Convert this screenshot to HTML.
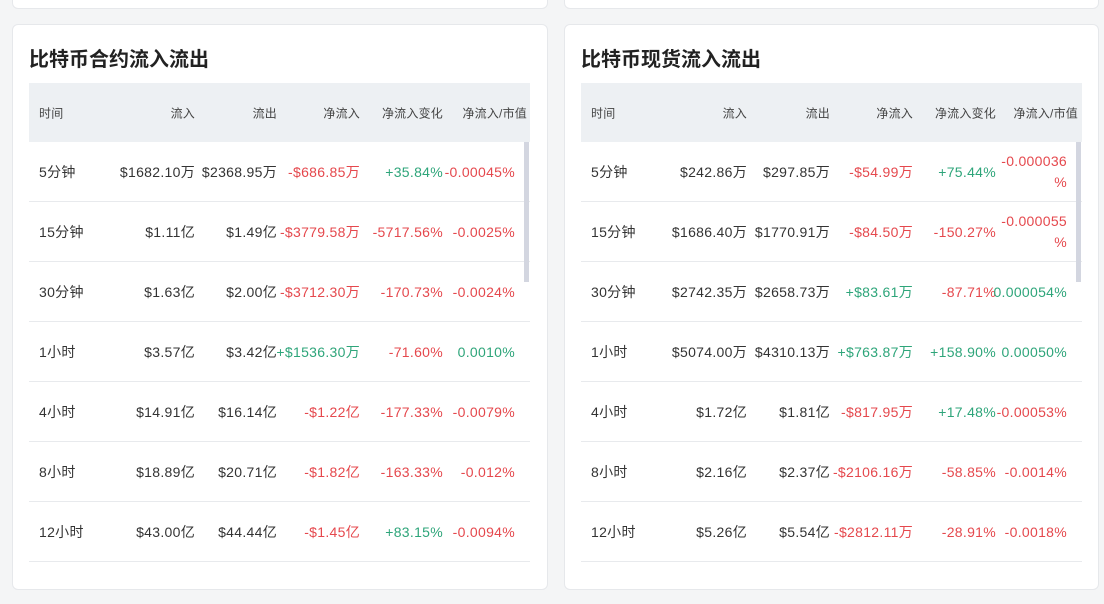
<!DOCTYPE html><html><head><meta charset="utf-8"><style>
body{margin:0;width:1104px;height:604px;background:#f4f5f6;font-family:"Liberation Sans","Noto Sans CJK SC",sans-serif;position:relative;overflow:hidden;color:#333}
.card{position:absolute;background:#fff;border:1px solid #e6e8eb;border-radius:6px}
h2{position:absolute;margin:0;font-size:20px;font-weight:bold;color:#222;top:18px;left:16px;font-family:"Noto Sans CJK SC",sans-serif}
.tb{position:absolute;top:58px;left:16px;width:501px}
.hd{height:59px;background:#edf0f3;position:relative;font-size:12px;color:#444;letter-spacing:0.2px}
.row{height:59px;border-bottom:1px solid #e8eaed;position:relative;font-size:14px;letter-spacing:0.3px;color:#333}
.c{position:absolute;top:50%;transform:translateY(-50%);text-align:right;white-space:nowrap}
.r{color:#e5484d}.g{color:#2ea57a}
.sb{position:absolute;width:5px;background:#d3d6e0;left:495px;top:59px;height:140px}
</style></head><body>
<div class="card" style="left:12px;top:-10px;width:534px;height:17px"></div>
<div class="card" style="left:564px;top:-10px;width:533px;height:17px"></div>

<div class="card" style="left:12px;top:24px;width:534px;height:564px">
<h2>比特币合约流入流出</h2>
<div class="tb">
<div class="hd"><span class="c" style="left:10px;text-align:left">时间</span><span class="c" style="right:335px">流入</span><span class="c" style="right:253px">流出</span><span class="c" style="right:170px">净流入</span><span class="c" style="right:87px">净流入变化</span><span class="c" style="right:3px">净流入/市值</span></div>
<div class="row"><span class="c" style="left:10px">5分钟</span><span class="c" style="right:335px">$1682.10万</span><span class="c" style="right:253px">$2368.95万</span><span class="c r" style="right:170px">-$686.85万</span><span class="c g" style="right:87px">+35.84%</span><span class="c r" style="right:15px">-0.00045%</span></div>
<div class="row"><span class="c" style="left:10px">15分钟</span><span class="c" style="right:335px">$1.11亿</span><span class="c" style="right:253px">$1.49亿</span><span class="c r" style="right:170px">-$3779.58万</span><span class="c r" style="right:87px">-5717.56%</span><span class="c r" style="right:15px">-0.0025%</span></div>
<div class="row"><span class="c" style="left:10px">30分钟</span><span class="c" style="right:335px">$1.63亿</span><span class="c" style="right:253px">$2.00亿</span><span class="c r" style="right:170px">-$3712.30万</span><span class="c r" style="right:87px">-170.73%</span><span class="c r" style="right:15px">-0.0024%</span></div>
<div class="row"><span class="c" style="left:10px">1小时</span><span class="c" style="right:335px">$3.57亿</span><span class="c" style="right:253px">$3.42亿</span><span class="c g" style="right:170px">+$1536.30万</span><span class="c r" style="right:87px">-71.60%</span><span class="c g" style="right:15px">0.0010%</span></div>
<div class="row"><span class="c" style="left:10px">4小时</span><span class="c" style="right:335px">$14.91亿</span><span class="c" style="right:253px">$16.14亿</span><span class="c r" style="right:170px">-$1.22亿</span><span class="c r" style="right:87px">-177.33%</span><span class="c r" style="right:15px">-0.0079%</span></div>
<div class="row"><span class="c" style="left:10px">8小时</span><span class="c" style="right:335px">$18.89亿</span><span class="c" style="right:253px">$20.71亿</span><span class="c r" style="right:170px">-$1.82亿</span><span class="c r" style="right:87px">-163.33%</span><span class="c r" style="right:15px">-0.012%</span></div>
<div class="row"><span class="c" style="left:10px">12小时</span><span class="c" style="right:335px">$43.00亿</span><span class="c" style="right:253px">$44.44亿</span><span class="c r" style="right:170px">-$1.45亿</span><span class="c g" style="right:87px">+83.15%</span><span class="c r" style="right:15px">-0.0094%</span></div>
<div class="sb"></div>
</div></div>

<div class="card" style="left:564px;top:24px;width:533px;height:564px">
<h2>比特币现货流入流出</h2>
<div class="tb">
<div class="hd"><span class="c" style="left:10px;text-align:left">时间</span><span class="c" style="right:335px">流入</span><span class="c" style="right:252px">流出</span><span class="c" style="right:169px">净流入</span><span class="c" style="right:86px">净流入变化</span><span class="c" style="right:4px">净流入/市值</span></div>
<div class="row"><span class="c" style="left:10px">5分钟</span><span class="c" style="right:335px">$242.86万</span><span class="c" style="right:252px">$297.85万</span><span class="c r" style="right:169px">-$54.99万</span><span class="c g" style="right:86px">+75.44%</span><span class="c r" style="right:15px;line-height:21px">-0.000036<br>%</span></div>
<div class="row"><span class="c" style="left:10px">15分钟</span><span class="c" style="right:335px">$1686.40万</span><span class="c" style="right:252px">$1770.91万</span><span class="c r" style="right:169px">-$84.50万</span><span class="c r" style="right:86px">-150.27%</span><span class="c r" style="right:15px;line-height:21px">-0.000055<br>%</span></div>
<div class="row"><span class="c" style="left:10px">30分钟</span><span class="c" style="right:335px">$2742.35万</span><span class="c" style="right:252px">$2658.73万</span><span class="c g" style="right:169px">+$83.61万</span><span class="c r" style="right:86px">-87.71%</span><span class="c g" style="right:15px">0.000054%</span></div>
<div class="row"><span class="c" style="left:10px">1小时</span><span class="c" style="right:335px">$5074.00万</span><span class="c" style="right:252px">$4310.13万</span><span class="c g" style="right:169px">+$763.87万</span><span class="c g" style="right:86px">+158.90%</span><span class="c g" style="right:15px">0.00050%</span></div>
<div class="row"><span class="c" style="left:10px">4小时</span><span class="c" style="right:335px">$1.72亿</span><span class="c" style="right:252px">$1.81亿</span><span class="c r" style="right:169px">-$817.95万</span><span class="c g" style="right:86px">+17.48%</span><span class="c r" style="right:15px">-0.00053%</span></div>
<div class="row"><span class="c" style="left:10px">8小时</span><span class="c" style="right:335px">$2.16亿</span><span class="c" style="right:252px">$2.37亿</span><span class="c r" style="right:169px">-$2106.16万</span><span class="c r" style="right:86px">-58.85%</span><span class="c r" style="right:15px">-0.0014%</span></div>
<div class="row"><span class="c" style="left:10px">12小时</span><span class="c" style="right:335px">$5.26亿</span><span class="c" style="right:252px">$5.54亿</span><span class="c r" style="right:169px">-$2812.11万</span><span class="c r" style="right:86px">-28.91%</span><span class="c r" style="right:15px">-0.0018%</span></div>
<div class="sb"></div>
</div></div>
</body></html>
